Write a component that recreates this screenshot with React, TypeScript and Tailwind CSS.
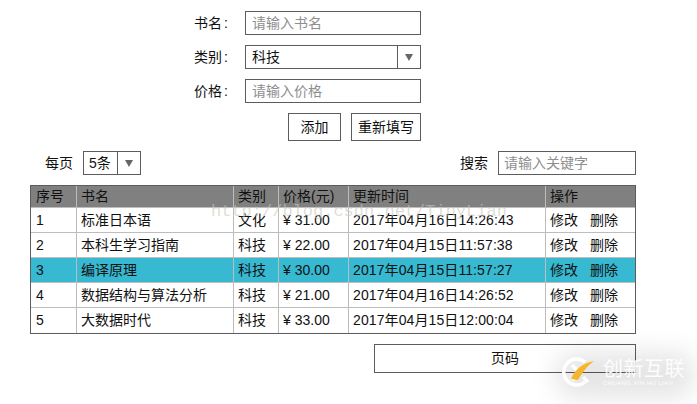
const font = "font-['Liberation_Sans','Noto_Sans_CJK_SC',sans-serif]";

const rows = [
  { id: 1, name: "标准日本语", type: "文化", price: "31.00", time: "2017年04月16日14:26:43" },
  { id: 2, name: "本科生学习指南", type: "科技", price: "22.00", time: "2017年04月15日11:57:38" },
  { id: 3, name: "编译原理", type: "科技", price: "30.00", time: "2017年04月15日11:57:27", active: true },
  { id: 4, name: "数据结构与算法分析", type: "科技", price: "21.00", time: "2017年04月16日14:26:52" },
  { id: 5, name: "大数据时代", type: "科技", price: "33.00", time: "2017年04月15日12:00:04" },
];

const grid = "grid grid-cols-[45px_157px_45px_70px_197px_1fr]";
const cell = "border-l border-[#bdbdbd] first:border-l-0 pl-[4px] first:pl-[5px] flex items-center";

function Arrow() {
  return <span className="w-0 h-0 border-x-[4px] border-x-transparent border-t-[7px] border-t-[#666]" />;
}

function Field({ label, placeholder }: { label: string; placeholder: string }) {
  return (
    <div className="flex items-center h-6">
      <span className="w-[51px]">{label}<span className="ml-[2px]">:</span></span>
      <div className="w-[176px] h-6 border border-[#5c5c5c] pl-[6px] flex items-center text-[#8e8e8e]">
        {placeholder}
      </div>
    </div>
  );
}

export default function App() {
  return (
    <div className={`${font} relative w-[697px] h-[404px] overflow-hidden bg-white text-[#111] text-[14px]`}>
      {/* form */}
      <div className="pt-[11px] pl-[194px] flex flex-col gap-[10px]">
        <Field label="书名" placeholder="请输入书名" />
        <div className="flex items-center h-6">
          <span className="w-[51px]">类别<span className="ml-[2px]">:</span></span>
          <div className="w-[176px] h-6 border border-[#5c5c5c] flex items-center">
            <span className="flex-1 pl-[6px]">科技</span>
            <span className="w-[23px] h-full border-l border-[#5c5c5c] flex items-center justify-center">
              <Arrow />
            </span>
          </div>
        </div>
        <Field label="价格" placeholder="请输入价格" />
        <div className="flex justify-end gap-[10px] w-[227px]">
          <button className="w-[53px] h-7 border border-[#5c5c5c]">添加</button>
          <button className="w-[70px] h-7 border border-[#5c5c5c]">重新填写</button>
        </div>
      </div>

      {/* toolbar */}
      <div className="mt-[10px] ml-[45px] w-[591px] h-6 flex items-center">
        <span className="w-[38px]">每页</span>
        <div className="w-[58px] h-6 border border-[#5c5c5c] flex items-center">
          <span className="w-[33px] pl-[5px]">5条</span>
          <span className="flex-1 h-full border-l border-[#5c5c5c] flex items-center justify-center">
            <Arrow />
          </span>
        </div>
        <span className="ml-auto w-[38px]">搜索</span>
        <div className="w-[138px] h-6 border border-[#5c5c5c] pl-[5px] flex items-center text-[#8e8e8e]">
          请输入关键字
        </div>
      </div>

      {/* table */}
      <div className="mt-[10px] ml-[30px] w-[606px] border border-[#5c5c5c]">
        <div className={`${grid} h-[21px] bg-[#808080] border-b border-[#bdbdbd] box-content`}>
          {["序号", "书名", "类别", "价格(元)", "更新时间", "操作"].map((h) => (
            <div key={h} className={cell}>{h}</div>
          ))}
        </div>
        {rows.map((r, i) => (
          <div
            key={r.id}
            className={`${grid} h-[25px] ${i < rows.length - 1 ? "border-b border-[#bdbdbd]" : ""} ${r.active ? "bg-[#36b9d1]" : ""}`}
          >
            <div className={cell}>{r.id}</div>
            <div className={cell}>{r.name}</div>
            <div className={cell}>{r.type}</div>
            <div className={cell}>¥ {r.price}</div>
            <div className={`${cell} tracking-[0.1px]`}>{r.time}</div>
            <div className={cell}>
              <span className="w-[40px]">修改</span>
              <span>删除</span>
            </div>
          </div>
        ))}
      </div>

      {/* pagination */}
      <div className="mt-[10px] ml-[374px] w-[262px] h-[29px] border border-[#5c5c5c] flex items-center justify-center">
        页码
      </div>

      {/* watermarks */}
      <div className="absolute left-[211px] top-[202px] font-['Liberation_Mono',monospace] text-[17px] leading-[20px] text-[#c9c9bd]/60 pointer-events-none">
        http://blog.csdn.net/TinyLian
      </div>
      <div className="absolute left-[556px] top-[352px] w-[138px] h-[46px] rounded-[20px] bg-black/10 blur-md" />
      <div className="absolute left-[562px] top-[358px] flex items-center gap-[9px] pointer-events-none">
        <svg width="32" height="30" viewBox="0 0 32 30" className="-mt-[2px]">
          <path d="M23 5 A13 13 0 1 0 23 25" stroke="#ffffff" strokeWidth="3.5" fill="none" />
          <path d="M10 8 L17 15 L10 23 M21 20 L26 25" stroke="#ffffff" strokeWidth="3.5" fill="none" />
          <path d="M9 22 C13 12 21 6 32 4 C25 9 21 15 16 23 Z" fill="#f5b52e" />
        </svg>
        <div className="flex flex-col items-start text-white/90">
          <span className="text-[20px] leading-[22px] tracking-[0.5px]">创新互联</span>
          <span className="text-[6px] leading-[7px] tracking-[0.4px]">CHUANG XIN HU LIAN</span>
        </div>
      </div>
    </div>
  );
}
